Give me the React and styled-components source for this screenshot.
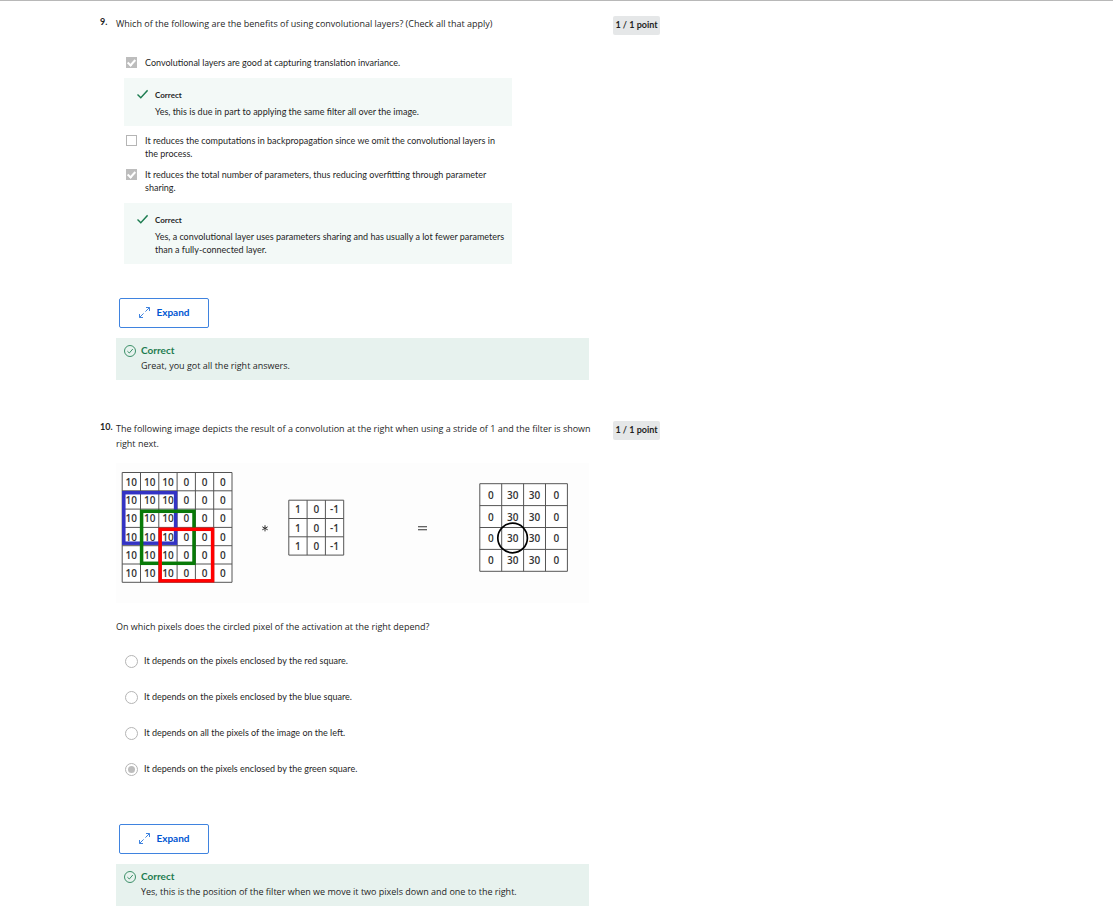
import React from 'react';
import styled, { createGlobalStyle } from 'styled-components';

const GlobalStyle = createGlobalStyle`
  *, *::before, *::after { box-sizing: border-box; }
  body {
    margin: 0;
    background: #fff;
    color: #1f1f1f;
    font-family: Lato, 'Open Sans', sans-serif;
    font-size: 9px;
    line-height: 13px;
  }
`;

const Page = styled.main`
  border-top: 1px solid #b8b8b8;
  padding: 15px 24px 12px 100px;
  display: flex;
  flex-direction: column;
  gap: 41px;
`;

const Question = styled.section`
  display: grid;
  grid-template-columns: 16px minmax(0, 473px) auto;
  justify-content: start;
  align-items: start;
`;

const QuestionNumber = styled.span`
  font-weight: 700;
  line-height: 12px;
  white-space: nowrap;
`;

const Prompt = styled.p`
  margin: 0 -8px 0 0;
  font-family: 'Open Sans', sans-serif;
  line-height: 15px;
`;

const Points = styled.span`
  margin-left: 24px;
  width: 47px;
  height: 19px;
  border-radius: 2px;
  background: #e5e7e8;
  font-weight: 700;
  line-height: 18px;
  text-align: center;
  white-space: nowrap;
`;

const OptionList = styled.fieldset`
  margin: ${(p) => p.$top}px 0 0;
  padding: 0 0 0 8px;
  border: 0;
  min-width: 0;
  max-width: 396px;
  display: flex;
  flex-direction: column;
  gap: ${(p) => p.$gap}px;
`;

const Option = styled.label`
  display: flex;
  align-items: flex-start;
  gap: ${(p) => p.$gap}px;
  padding: 0 16px 0 ${(p) => p.$indent}px;
`;

const Checkbox = styled.input`
  appearance: none;
  flex: none;
  display: grid;
  place-items: start center;
  width: 11px;
  height: 11px;
  margin: 1px 0 0;
  border: 1px solid #b5b5b5;
  background: #fff;
  &:checked { background: #bdbdbd; border-color: #bdbdbd; }
  &:checked::after {
    content: '';
    width: 5px;
    height: 8px;
    border: solid #fff;
    border-width: 0 2px 2px 0;
    transform: rotate(42deg);
  }
`;

const Radio = styled.input`
  appearance: none;
  flex: none;
  display: grid;
  place-items: center;
  width: 13px;
  height: 13px;
  margin: 1px 0 0;
  border: 1px solid #b5b5b5;
  border-radius: 50%;
  background: #fff;
  &:checked::after {
    content: '';
    width: 7px;
    height: 7px;
    border-radius: 50%;
    background: #bdbdbd;
  }
`;

const Feedback = styled.div`
  display: flex;
  gap: 7px;
  margin-top: 9px;
  padding: 11px 4px 8px 13px;
  background: #f3f9f7;
`;

const FeedbackTitle = styled.strong`
  display: block;
  margin-bottom: 3px;
  font-size: 8px;
`;

const ExpandButton = styled.button`
  display: flex;
  align-items: center;
  justify-content: center;
  gap: 6px;
  width: 90px;
  height: 30px;
  margin: ${(p) => p.$top}px 0 10px 3px;
  padding: 0 0 1px 1px;
  border: 1px solid #3f83df;
  border-radius: 2px;
  background: #fff;
  color: #0056d2;
  font: inherit;
  font-size: 10px;
  font-weight: 700;
`;

const Banner = styled.div`
  display: flex;
  gap: 5px;
  padding: 5px 8px 6px;
  min-height: 42px;
  background: #e7f2ee;
  font-family: 'Open Sans', sans-serif;
  line-height: 15px;
`;

const BannerTitle = styled.strong`
  display: block;
  color: #1d7c50;
  font-family: Lato, sans-serif;
  font-size: 10px;
`;

const Icon = styled.svg`
  flex: none;
  display: block;
  margin-top: ${(p) => p.$top || 0}px;
  fill: none;
  stroke: ${(p) => p.$color};
`;

const Figure = styled.svg`
  display: block;
  width: 100%;
  height: auto;
  margin: 12px 0 16px;
  background: #fdfdfd;
`;

const Digits = styled.text`
  font-family: 'Open Sans', sans-serif;
  font-size: 10px;
  font-weight: 600;
  text-anchor: middle;
  fill: #333;
`;

function Explanation({ children }) {
  return (
    <Feedback>
      <Icon $color="#1d7c50" $top={0} width="11" height="11" viewBox="0 0 11 11" strokeWidth="1.4" aria-hidden="true">
        <path d="M0.5 5.5 L3.8 8.8 L10.6 1.3" />
      </Icon>
      <div>
        <FeedbackTitle>Correct</FeedbackTitle>
        {children}
      </div>
    </Feedback>
  );
}

function Expand({ top }) {
  return (
    <ExpandButton type="button" $top={top}>
      <Icon $color="#3f83df" width="11" height="11" viewBox="0 0 11 11" strokeWidth="1" aria-hidden="true">
        <path d="M0.5 10.5 L4.6 6.4 M6.4 4.6 L10.5 0.5 M7 0.5 H10.5 V4 M0.5 7 V10.5 H4" />
      </Icon>
      Expand
    </ExpandButton>
  );
}

function Result({ children }) {
  return (
    <Banner role="status">
      <Icon $color="#3d9069" $top={2} width="12" height="12" viewBox="0 0 12 12" strokeWidth="1" aria-hidden="true">
        <circle cx="6" cy="6" r="5.5" />
        <path d="M3.4 6.2 L5.3 8 L8.8 4" />
      </Icon>
      <div>
        <BannerTitle>Correct</BannerTitle>
        {children}
      </div>
    </Banner>
  );
}

function Matrix({ x, y, cell, rows }) {
  const n = rows.length;
  const lines = Array.from({ length: n + 1 }, (_, i) => i * cell);
  return (
    <g transform={`translate(${x} ${y})`}>
      <rect width={n * cell} height={n * cell} fill="#fff" />
      <g stroke="#555" strokeWidth="1">
        {lines.map((p) => (
          <path key={p} d={`M${p} 0 V${n * cell} M0 ${p} H${n * cell}`} />
        ))}
      </g>
      {rows.map((row, r) =>
        row.map((v, c) => (
          <Digits key={`${r}-${c}`} x={(c + 0.5) * cell} y={(r + 0.5) * cell + 4}>
            {v}
          </Digits>
        ))
      )}
    </g>
  );
}

const repeat = (row, n) => Array.from({ length: n }, () => row);

function Convolution() {
  return (
    <Figure viewBox="0 0 473 140" role="img" aria-label="Convolution of a 6 by 6 image with a 3 by 3 filter">
      <Matrix x={6.2} y={9.5} cell={18.3} rows={repeat([10, 10, 10, 0, 0, 0], 6)} />
      <g fill="none" strokeWidth="3.5">
        <rect x="7.8" y="29.7" width="51.8" height="50.5" stroke="#3333c4" />
        <rect x="25.6" y="48.3" width="52.4" height="52" stroke="#087a08" />
        <rect x="44.2" y="66.3" width="52.4" height="51.5" stroke="#f00" />
      </g>
      <path d="M149 62.2 V68.4 M146.3 63.8 L151.7 66.8 M151.7 63.8 L146.3 66.8" stroke="#333" strokeWidth="1" />
      <Matrix x={172.8} y={37.2} cell={18.3} rows={repeat([1, 0, '-1'], 3)} />
      <path d="M302 63.8 H311 M302 66.7 H311" stroke="#333" strokeWidth="1.1" />
      <Matrix x={363.8} y={20.7} cell={21.9} rows={repeat([0, 30, 30, 0], 4)} />
      <circle cx="396.6" cy="75" r="14.8" fill="none" stroke="#000" strokeWidth="1.7" />
    </Figure>
  );
}

function CheckOption({ checked, children }) {
  return (
    <Option $gap={8} $indent={2}>
      <Checkbox type="checkbox" checked={checked} readOnly />
      <span>{children}</span>
    </Option>
  );
}

const radioOptions = [
  'It depends on the pixels enclosed by the red square.',
  'It depends on the pixels enclosed by the blue square.',
  'It depends on all the pixels of the image on the left.',
  'It depends on the pixels enclosed by the green square.',
];

export default function App() {
  return (
    <>
      <GlobalStyle />
      <Page>
        <Question>
          <QuestionNumber>9.</QuestionNumber>
          <div>
            <Prompt>
              Which of the following are the benefits of using convolutional layers? (Check all that apply)
            </Prompt>
            <OptionList $top={25} $gap={8} aria-label="Answers">
              <div>
                <CheckOption checked>
                  Convolutional layers are good at capturing translation invariance.
                </CheckOption>
                <Explanation>Yes, this is due in part to applying the same filter all over the image.</Explanation>
              </div>
              <CheckOption checked={false}>
                It reduces the computations in backpropagation since we omit the convolutional layers in the process.
              </CheckOption>
              <div>
                <CheckOption checked>
                  It reduces the total number of parameters, thus reducing overfitting through parameter sharing.
                </CheckOption>
                <Explanation>
                  Yes, a convolutional layer uses parameters sharing and has usually a lot fewer parameters
                  <br />
                  than a fully-connected layer.
                </Explanation>
              </div>
            </OptionList>
            <Expand top={34} />
            <Result>Great, you got all the right answers.</Result>
          </div>
          <Points>1 / 1 point</Points>
        </Question>

        <Question>
          <QuestionNumber>10.</QuestionNumber>
          <div>
            <Prompt>
              The following image depicts the result of a convolution at the right when using a stride of 1 and the
              filter is shown
              <br />
              right next.
            </Prompt>
            <Convolution />
            <Prompt>On which pixels does the circled pixel of the activation at the right depend?</Prompt>
            <OptionList $top={20} $gap={22} aria-label="Answers">
              {radioOptions.map((text, i) => (
                <Option key={text} $gap={6} $indent={1}>
                  <Radio type="radio" name="pixels" checked={i === 3} readOnly />
                  <span>{text}</span>
                </Option>
              ))}
            </OptionList>
            <Expand top={48} />
            <Result>Yes, this is the position of the filter when we move it two pixels down and one to the right.</Result>
          </div>
          <Points>1 / 1 point</Points>
        </Question>
      </Page>
    </>
  );
}
